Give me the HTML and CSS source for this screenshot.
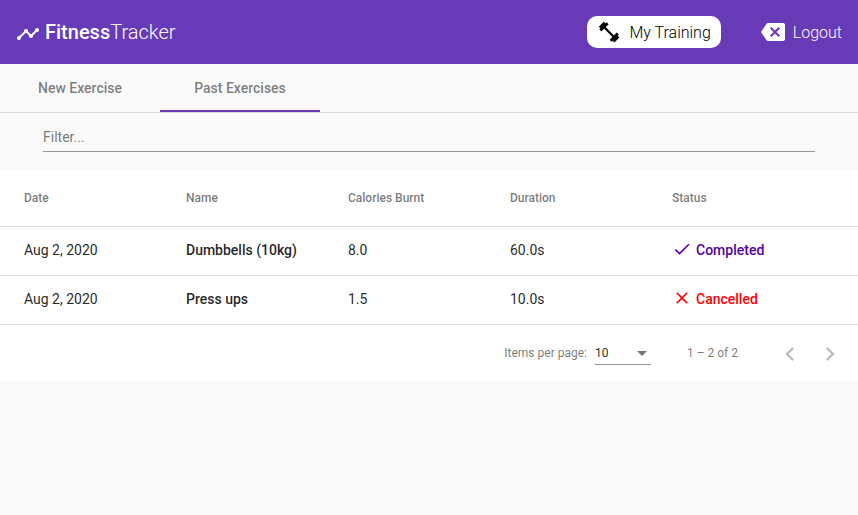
FILE: index.html
```html
<!DOCTYPE html>
<html lang="en">
<head>
<meta charset="utf-8">
<title>FitnessTracker</title>
<link rel="stylesheet" href="styles.css">
</head>
<body>
<header class="toolbar">
  <a class="brand">
    <svg class="icon" viewBox="0 0 24 24"><path d="M23 8c0 1.1-.9 2-2 2-.18 0-.35-.02-.51-.07l-3.56 3.55c.05.16.07.34.07.52 0 1.1-.9 2-2 2s-2-.9-2-2c0-.18.02-.36.07-.52l-2.55-2.55c-.16.05-.34.07-.52.07s-.36-.02-.52-.07l-4.55 4.56c.05.16.07.33.07.51 0 1.1-.9 2-2 2s-2-.9-2-2 .9-2 2-2c.18 0 .35.02.51.07l4.56-4.55C8.02 9.36 8 9.18 8 9c0-1.1.9-2 2-2s2 .9 2 2c0 .18-.02.36-.07.52l2.55 2.55c.16-.05.34-.07.52-.07s.36.02.52.07l3.55-3.56C19.02 8.35 19 8.18 19 8c0-1.1.9-2 2-2s2 .9 2 2z"/></svg>
    <span class="brand-name"><b>Fitness</b>Tracker</span>
  </a>
  <nav class="links">
    <a class="link active">
      <svg class="icon dumbbell" viewBox="0 0 24 24"><path d="M7 7l10.5 10.5" stroke="currentColor" stroke-width="2.3"/><path d="M3.4 10.4l7.2-7.2M13.6 20.8l7.2-7.2" stroke="currentColor" stroke-width="2.8"/><path d="M2.8 7.8l5-5M16.4 21.4l5-5" stroke="currentColor" stroke-width="2.8"/></svg>
      <span>My Training</span>
    </a>
    <a class="link logout">
      <svg class="icon" viewBox="0 0 24 24"><path d="M22 3H7c-.69 0-1.23.35-1.59.88L0 12l5.41 8.11c.36.53.9.89 1.59.89h15c1.1 0 2-.9 2-2V5c0-1.1-.9-2-2-2zm-3 12.59L17.59 17 14 13.41 10.41 17 9 15.59 12.59 12 9 8.41 10.41 7 14 10.59 17.59 7 19 8.41 15.41 12 19 15.59z"/></svg>
      <span>Logout</span>
    </a>
  </nav>
</header>
<nav class="tabs">
  <a class="tab">New Exercise</a>
  <a class="tab selected">Past Exercises</a>
</nav>
<main>
  <div class="filter"><input type="text" placeholder="Filter..." aria-label="Filter"></div>
  <section class="table">
    <div class="row head"><span>Date</span><span>Name</span><span>Calories Burnt</span><span>Duration</span><span>Status</span></div>
    <div class="row">
      <span>Aug 2, 2020</span><span class="name">Dumbbells (10kg)</span><span>8.0</span><span>60.0s</span>
      <span class="status completed"><svg viewBox="0 0 24 24"><path d="M9 16.2L4.8 12l-1.4 1.4L9 19 21 7l-1.4-1.4L9 16.2z"/></svg>Completed</span>
    </div>
    <div class="row">
      <span>Aug 2, 2020</span><span class="name">Press ups</span><span>1.5</span><span>10.0s</span>
      <span class="status cancelled"><svg viewBox="0 0 24 24"><path d="M19 6.41L17.59 5 12 10.59 6.41 5 5 6.41 10.59 12 5 17.59 6.41 19 12 13.41 17.59 19 19 17.59 13.41 12z"/></svg>Cancelled</span>
    </div>
  </section>
  <footer class="paginator">
    <span class="label">Items per page:</span>
    <div class="select"><span>10</span><i class="arrow"></i></div>
    <span class="range">1 – 2 of 2</span>
    <div class="pager"><svg viewBox="0 0 24 24"><path d="M15.41 7.41L14 6l-6 6 6 6 1.41-1.41L10.83 12z"/></svg></div>
    <div class="pager"><svg viewBox="0 0 24 24"><path d="M10 6L8.59 7.41 13.17 12l-4.58 4.59L10 18l6-6z"/></svg></div>
  </footer>
</main>
</body>
</html>
```
FILE: styles.css
```css
* { box-sizing: border-box; }
body {
  margin: 0;
  background: #fafafa;
  color: rgba(0, 0, 0, .87);
  font: 400 14px/20px Roboto, "Liberation Sans", sans-serif;
}
svg { display: block; fill: currentColor; flex: none; }
.toolbar {
  display: flex;
  align-items: center;
  justify-content: space-between;
  height: 64px;
  padding: 0 16px;
  background: #673ab7;
  color: #fff;
}
.brand, .links, .link { display: flex; align-items: center; }
.icon { width: 24px; height: 24px; }
.brand { gap: 5px; }
.brand .icon { margin-top: 4px; }
.brand-name { font-size: 20px; font-weight: 300; line-height: 32px; }
.brand-name b { font-weight: 500; }
.links { gap: 40px; }
.link { gap: 8px; font-size: 16px; font-weight: 300; }
.link span { padding-top: 2px; }
.link.active {
  height: 32px;
  padding: 0 10px;
  border-radius: 10px;
  background: #fff;
  color: #000;
}
.tabs { display: flex; height: 49px; border-bottom: 1px solid rgba(0, 0, 0, .12); }
.tab {
  width: 160px;
  height: 48px;
  border-bottom: 2px solid transparent;
  color: rgba(0, 0, 0, .52);
  font-weight: 500;
  line-height: 48px;
  text-align: center;
}
.tab.selected { border-color: #673ab7; }
.filter { height: 57px; padding: 10px 43px 0; }
.filter input {
  display: block;
  width: 100%;
  height: 29px;
  padding: 0 0 1px;
  border: 0;
  border-bottom: 1px solid #949494;
  background: none;
  font: inherit;
}
.filter input::placeholder { color: rgba(0, 0, 0, .54); }
.table, .paginator { background: #fff; }
.row {
  display: grid;
  grid-template-columns: repeat(5, 1fr);
  align-items: center;
  height: 49px;
  padding: 0 24px 2px;
  border-bottom: 1px solid rgba(0, 0, 0, .12);
}
.row.head {
  height: 57px;
  padding-bottom: 0;
  color: rgba(0, 0, 0, .54);
  font-size: 12px;
  font-weight: 500;
}
.name, .status { font-weight: 500; }
.status { display: flex; align-items: center; gap: 4px; }
.status svg { width: 20px; height: 20px; margin-top: -2px; }
.completed { color: #5600a3; }
.cancelled { color: #f00; }
.paginator {
  display: flex;
  align-items: center;
  justify-content: flex-end;
  height: 56px;
  padding-right: 8px;
  color: rgba(0, 0, 0, .54);
  font-size: 12px;
}
.select {
  display: flex;
  align-items: center;
  justify-content: space-between;
  width: 56px;
  height: 24px;
  margin: 0 36px 0 8px;
  border-bottom: 1px solid #949494;
  color: rgba(0, 0, 0, .87);
}
.arrow {
  margin: 2px 4px 0 0;
  border: 5px solid transparent;
  border-top-color: rgba(0, 0, 0, .54);
  border-bottom: 0;
}
.range { margin-right: 32px; }
.pager { width: 40px; padding: 8px 6px 6px; color: rgba(0, 0, 0, .26); }
.pager svg { width: 28px; height: 28px; }
```
